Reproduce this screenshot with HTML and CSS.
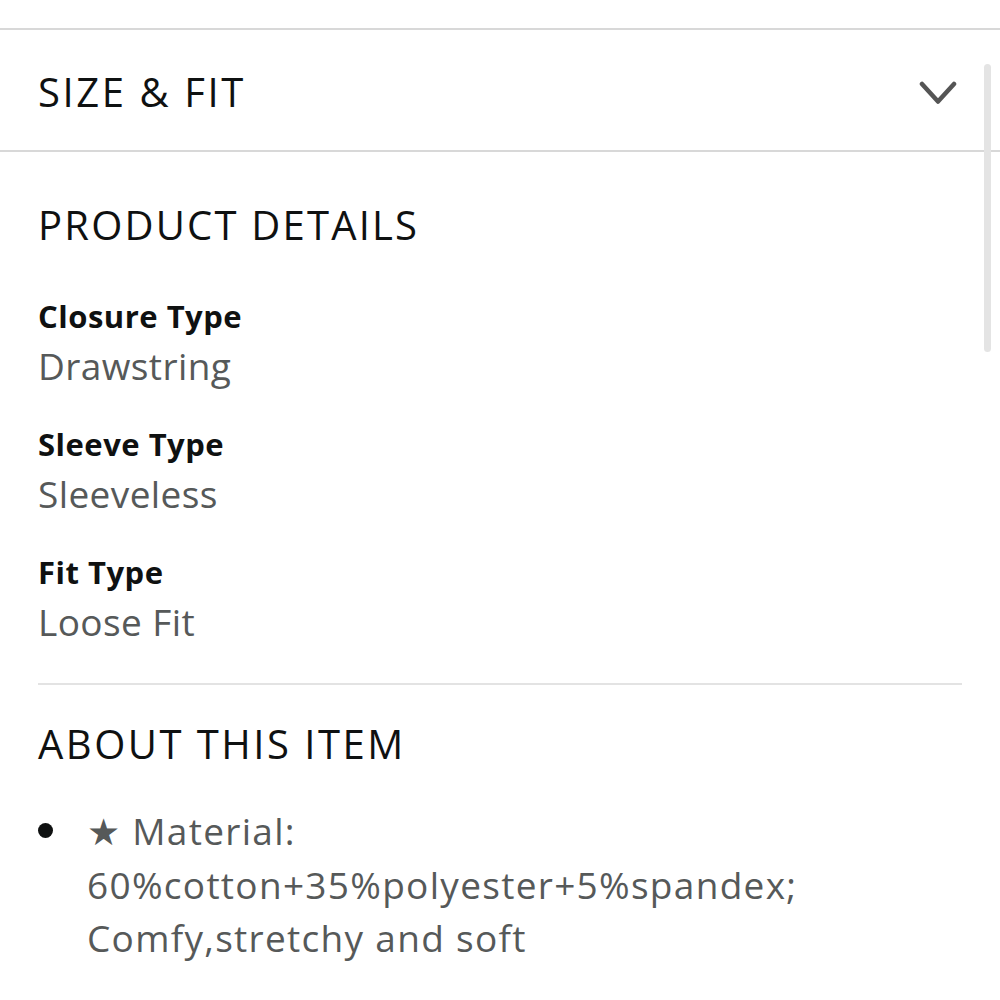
FILE: index.html
```html
<!DOCTYPE html>
<html>
	<head>
		<meta charset="UTF-8">
		<title>Product details</title>
		<link rel="stylesheet" href="styles.css">
	</head>
	<body>
		<div class="page">
			<!-- 折叠的尺码栏 -->
			<div class="fold">
				<span class="fold-title">SIZE &amp; FIT</span>
				<svg class="chevron" width="38" height="26" viewBox="0 0 38 26">
					<polyline points="3,3 19,20.5 35,3" fill="none" stroke="#555" stroke-width="4.5" stroke-linecap="round" stroke-linejoin="round"/>
				</svg>
			</div>

			<div class="section">
				<h2 class="heading">PRODUCT DETAILS</h2>
				<dl class="spec">
					<div class="spec-row">
						<dt>Closure Type</dt>
						<dd>Drawstring</dd>
					</div>
					<div class="spec-row">
						<dt>Sleeve Type</dt>
						<dd>Sleeveless</dd>
					</div>
					<div class="spec-row">
						<dt>Fit Type</dt>
						<dd>Loose Fit</dd>
					</div>
				</dl>

				<hr class="rule">

				<h2 class="heading about">ABOUT THIS ITEM</h2>
				<ul class="points">
					<li><span class="dot"></span><span class="point-text">★ Material: 60%cotton+35%polyester+5%spandex; Comfy,stretchy and soft</span></li>
				</ul>
			</div>

			<!-- 滚动条 -->
			<div class="scrollbar"></div>
		</div>
	</body>
</html>
```

FILE: styles.css
```css
*{
	margin: 0;
	padding: 0;
}

body{
	background-color: #fff;
	font-family: "Open Sans", "Noto Sans", sans-serif;
	color: #0f1111;
}

.page{
	position: relative;
	width: 1000px;
	height: 1000px;
	overflow: hidden;
	padding-top: 28px;
	box-sizing: border-box;
}

/*折叠栏*/
.fold{
	height: 120px;
	border-top: 2px solid #d8d8d8;
	border-bottom: 2px solid #d8d8d8;
	display: flex;
	align-items: center;
	justify-content: space-between;
	padding: 0 43px 0 38px;
}

.fold-title{
	font-size: 40px;
	line-height: 120px;
	letter-spacing: 2.6px;
	font-weight: 400;
	margin-top: 4px;
}

.chevron{
	display: block;
	margin-top: 8px;
}

/*内容区*/
.section{
	padding: 49px 38px 0 38px;
}

.heading{
	font-size: 40px;
	line-height: 48px;
	font-weight: 400;
	letter-spacing: 2.2px;
}

.spec{
	margin-top: 44px;
}

.spec-row{
	margin-bottom: 28px;
}

.spec dt{
	font-size: 31px;
	line-height: 46px;
	font-weight: 700;
	letter-spacing: 0.5px;
}

.spec dd{
	font-size: 37px;
	line-height: 54px;
	color: #565959;
	letter-spacing: 0.4px;
}

/*分割线，上边距会和最后一行的下边距合并*/
.rule{
	border: none;
	height: 2px;
	background-color: #e3e3e3;
	margin-top: 34px;
}

.about{
	margin-top: 35px;
	letter-spacing: 2.5px;
}

.points{
	list-style: none;
	margin-top: 36px;
}

.points li{
	display: flex;
	align-items: flex-start;
	font-size: 37px;
	line-height: 53.5px;
	color: #565959;
}

.dot{
	flex: none;
	width: 15px;
	height: 15px;
	border-radius: 50%;
	background-color: #0f1111;
	margin: 19px 34px 0 0;
}

.point-text{
	width: 780px;
	letter-spacing: 1.3px;
}

.scrollbar{
	position: absolute;
	left: 984px;
	top: 64px;
	width: 7px;
	height: 288px;
	border-radius: 4px;
	background-color: #e4e4e4;
}
```
